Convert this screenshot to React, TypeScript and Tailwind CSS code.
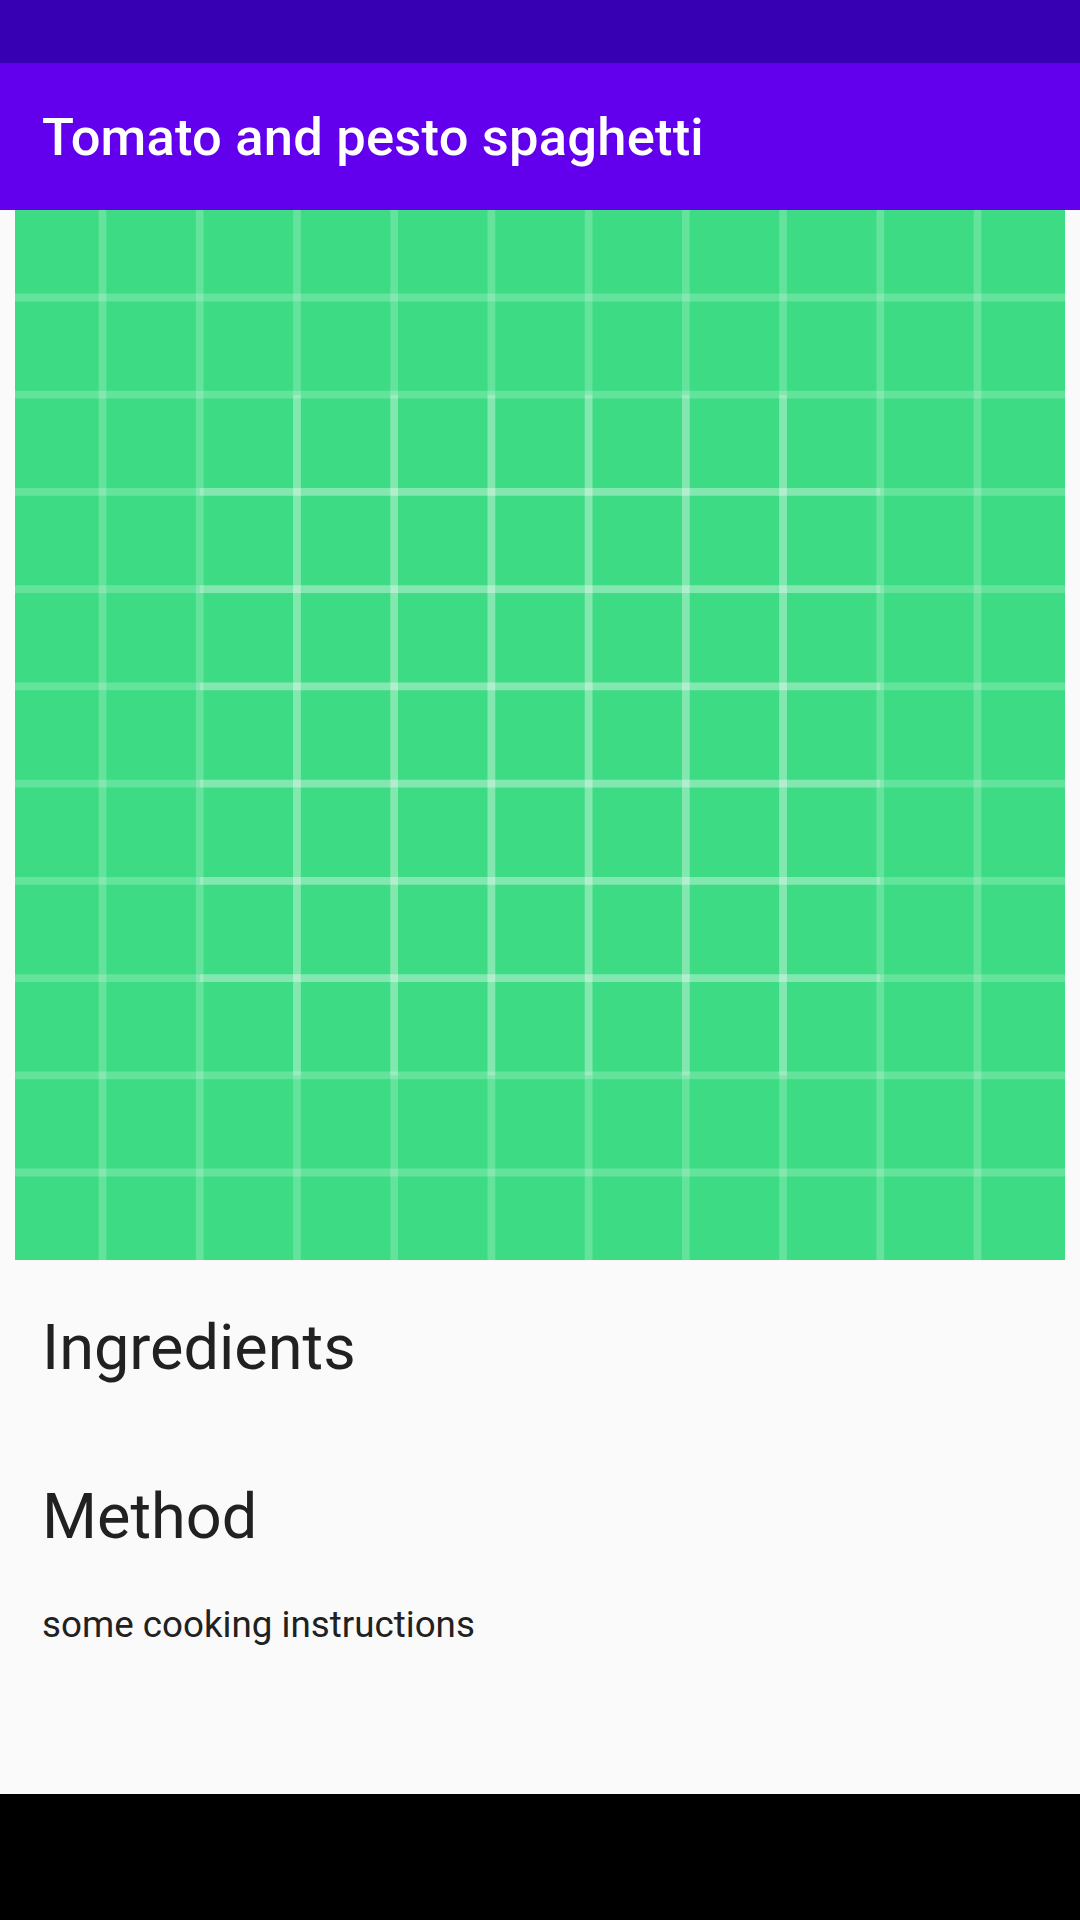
import React from "react";

function GridArt() {
  const full = [9, 19, 29, 39, 49, 59, 69, 79, 89, 99];
  const inner = [29, 39, 49, 59, 69, 79];
  const stroke = { stroke: "#FFFFFF", strokeOpacity: 0.2, strokeWidth: 0.8, fill: "none" } as const;
  return (
    <svg viewBox="0 0 108 108" className="block w-[1050px] h-[1050px]" preserveAspectRatio="none">
      <rect x="0" y="0" width="108" height="108" fill="#3DDC84" />
      {full.map((v) => (
        <path key={"v" + v} d={`M${v},0L${v},108`} {...stroke} />
      ))}
      {full.map((v) => (
        <path key={"h" + v} d={`M0,${v}L108,${v}`} {...stroke} />
      ))}
      {inner.map((v) => (
        <path key={"ih" + v} d={`M19,${v}L89,${v}`} {...stroke} />
      ))}
      {inner.map((v) => (
        <path key={"iv" + v} d={`M${v},19L${v},89`} {...stroke} />
      ))}
    </svg>
  );
}

export default function App() {
  return (
    <div className="flex flex-col w-[1080px] h-[1920px] bg-[#fafafa] overflow-hidden" style={{ fontFamily: "Roboto, 'Noto Sans', sans-serif" }}>
      <div className="h-[63px] bg-[#3700B3] shrink-0" />
      <div className="h-[147px] bg-[#6200EE] shrink-0 px-[42px] pt-[43px]">
        <div className="text-white text-[52.5px] leading-[62px] font-medium tracking-[0.2px]">Tomato and pesto spaghetti</div>
      </div>
      <div className="flex-1 flex flex-col">
        <div className="px-[15px]">
          <GridArt />
        </div>
        <div className="px-[42px] pt-[51px] text-[#212121]">
          <div className="text-[63px] leading-[74px]">Ingredients</div>
          <div className="text-[63px] leading-[74px] mt-[95px]">Method</div>
          <div className="text-[36.75px] leading-[43px] mt-[49px]">some cooking instructions</div>
        </div>
      </div>
      <div className="h-[126px] bg-black shrink-0" />
    </div>
  );
}
